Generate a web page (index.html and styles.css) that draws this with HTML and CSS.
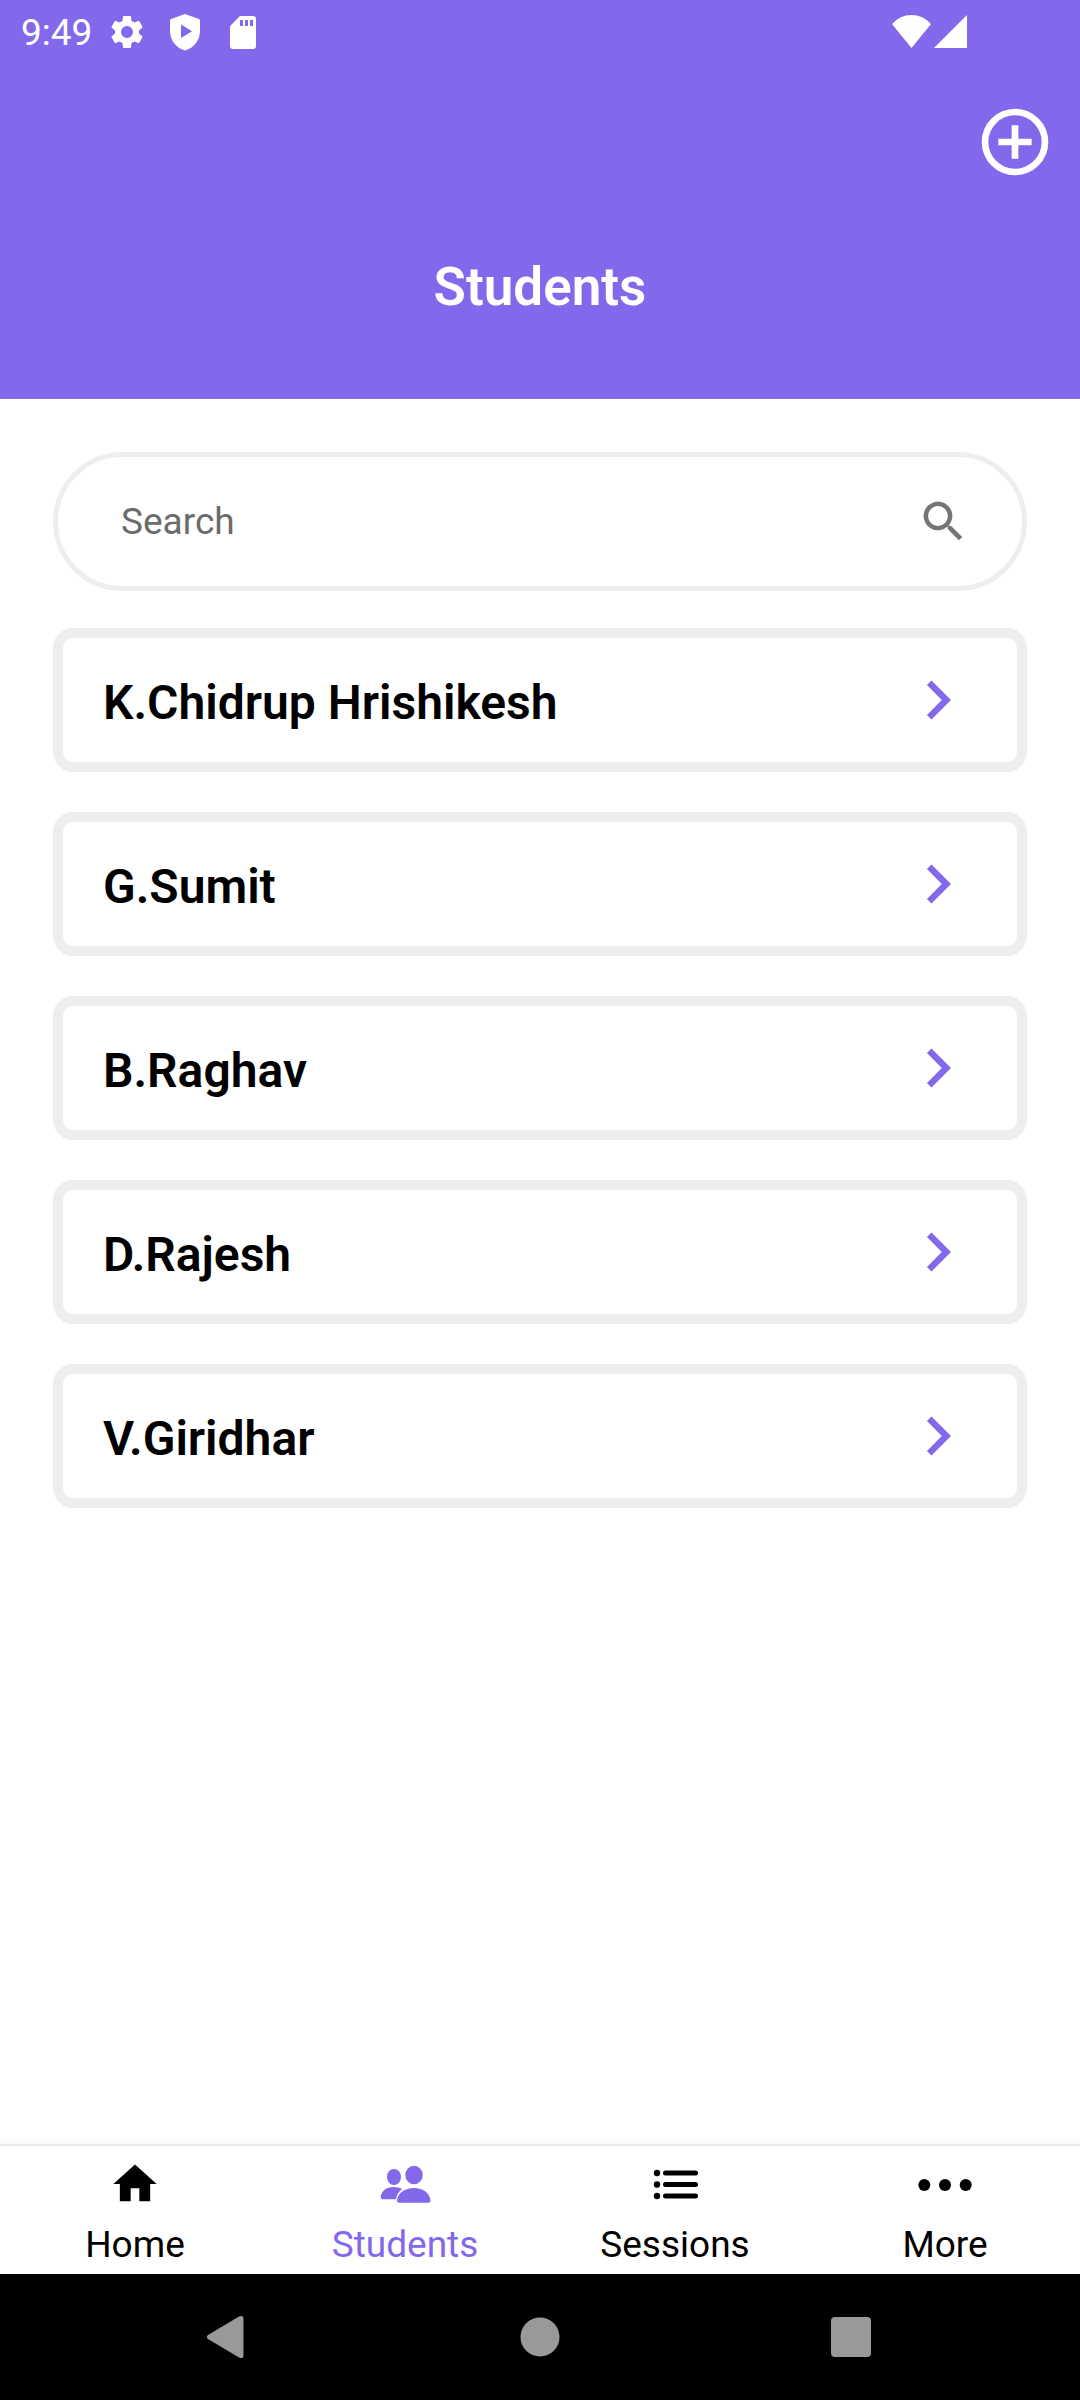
FILE: index.html
```html
<!DOCTYPE html>
<html lang="en">
<head>
<meta charset="utf-8">
<meta name="viewport" content="width=device-width, initial-scale=1">
<title>Students</title>
<link rel="stylesheet" href="styles.css">
</head>
<body>
<div class="app">
  <header class="header">
    <div class="status">
      <span class="time">9:49</span>
      <svg class="status-icon" viewBox="0 0 24 24"><path d="M19.14 12.94c.04-.3.06-.61.06-.94 0-.32-.02-.64-.07-.94l2.03-1.58a.49.49 0 0 0 .12-.61l-1.92-3.32a.49.49 0 0 0-.59-.22l-2.39.96c-.5-.38-1.03-.7-1.62-.94l-.36-2.54a.48.48 0 0 0-.48-.41h-3.84a.48.48 0 0 0-.47.41l-.36 2.54c-.59.24-1.13.57-1.62.94l-2.39-.96a.48.48 0 0 0-.59.22L2.74 8.87a.47.47 0 0 0 .12.61l2.03 1.58c-.05.3-.09.63-.09.94s.02.64.07.94l-2.03 1.58a.49.49 0 0 0-.12.61l1.92 3.32c.12.22.37.29.59.22l2.39-.96c.5.38 1.03.7 1.62.94l.36 2.54c.05.24.24.41.48.41h3.84c.24 0 .44-.17.47-.41l.36-2.54c.59-.24 1.13-.56 1.62-.94l2.39.96c.22.08.47 0 .59-.22l1.92-3.32a.47.47 0 0 0-.12-.61zM12 15.6a3.6 3.6 0 1 1 0-7.2 3.6 3.6 0 0 1 0 7.2z"/></svg>
      <svg class="status-icon" viewBox="0 0 40 40"><path fill-rule="evenodd" d="M20 2 34 7Q35 7.500 35 9V19C35 28 29 36 20 38.500 11 36 5 28 5 19V9Q5 7.500 6 7zM16 12.500V26L27 19.200z"/></svg>
      <svg class="status-icon" viewBox="0 0 40 40"><path fill-rule="evenodd" d="M17 4H30Q33 4 33 7V34Q33 37 30 37H10Q7 37 7 34V14zM17 8V14H20V8zM22 8V14H25V8zM27 8V14H30V8z"/></svg>
      <svg class="network" viewBox="0 0 76 34"><path d="M0 9Q8 0 19.500 0T39 9L19.500 33zM75 0V33H42z"/></svg>
    </div>
    <div class="actions">
      <button class="add" type="button" aria-label="Add student">
        <svg viewBox="0 0 24 24"><path d="M13 7h-2v4H7v2h4v4h2v-4h4v-2h-4V7zm-1-5a10 10 0 1 0 0 20 10 10 0 0 0 0-20zm0 18a8 8 0 1 1 0-16 8 8 0 0 1 0 16z"/></svg>
      </button>
    </div>
    <h1 class="title">Students</h1>
  </header>

  <main class="content">
    <form class="search">
      <input class="search-input" type="search" placeholder="Search" aria-label="Search">
      <button class="search-button" type="button" aria-label="Search">
        <svg viewBox="0 0 24 24"><path d="M15.500 14h-.79l-.28-.27A6.500 6.500 0 1 0 13.730 14.430l.27.28v.79l5 4.990L20.490 19zm-6 0a4.500 4.500 0 1 1 0-9 4.500 4.500 0 0 1 0 9z"/></svg>
      </button>
    </form>
    <ul class="students">
      <li><a class="student" href="#"><span class="name">K.Chidrup Hrishikesh</span><svg class="chevron" viewBox="0 0 24 24"><path d="M10 6 8.590 7.410 13.170 12l-4.580 4.590L10 18l6-6z"/></svg></a></li>
      <li><a class="student" href="#"><span class="name">G.Sumit</span><svg class="chevron" viewBox="0 0 24 24"><path d="M10 6 8.590 7.410 13.170 12l-4.580 4.590L10 18l6-6z"/></svg></a></li>
      <li><a class="student" href="#"><span class="name">B.Raghav</span><svg class="chevron" viewBox="0 0 24 24"><path d="M10 6 8.590 7.410 13.170 12l-4.580 4.590L10 18l6-6z"/></svg></a></li>
      <li><a class="student" href="#"><span class="name">D.Rajesh</span><svg class="chevron" viewBox="0 0 24 24"><path d="M10 6 8.590 7.410 13.170 12l-4.580 4.590L10 18l6-6z"/></svg></a></li>
      <li><a class="student" href="#"><span class="name">V.Giridhar</span><svg class="chevron" viewBox="0 0 24 24"><path d="M10 6 8.590 7.410 13.170 12l-4.580 4.590L10 18l6-6z"/></svg></a></li>
    </ul>
  </main>

  <nav class="tabs">
    <a class="tab" href="#"><svg viewBox="0 0 24 24"><path d="M10 20v-6h4v6h5v-8h3L12 3 2 12h3v8z"/></svg><span>Home</span></a>
    <a class="tab tab-active" href="#" aria-current="page"><svg viewBox="0 0 52 52"><ellipse cx="15" cy="19" rx="7" ry="8"/><ellipse cx="35" cy="17" rx="8.700" ry="9.300"/><path d="M4 41.300Q1.500 41.300 1.700 38.500C3 32 8 29 15 29Q20 29 23.300 31Q18 34.500 17 41.300zM20 44.700Q18 44.700 18 42.500C18.500 35 26 30 35 30S51 35 51.500 42.500Q51.500 44.700 49.500 44.700z"/></svg><span>Students</span></a>
    <a class="tab" href="#"><svg viewBox="0 0 52 52"><circle cx="8" cy="15" r="3.200"/><circle cx="8" cy="26.500" r="3.200"/><circle cx="8" cy="38" r="3.200"/><path class="line" d="M16.500 15H46.500M16.500 26.500H46.500M16.500 38H46.500"/></svg><span>Sessions</span></a>
    <a class="tab" href="#"><svg viewBox="0 0 52 52"><circle cx="5.300" cy="27" r="6"/><circle cx="26" cy="27" r="6"/><circle cx="46.700" cy="27" r="6"/></svg><span>More</span></a>
  </nav>

  <div class="system-nav">
    <button type="button" aria-label="Back"><svg viewBox="0 0 60 60"><path d="M9 28 40 9.500Q44.500 7.500 44.500 12V48Q44.500 52.500 40 50.500L9 32Q6.500 30 9 28z"/></svg></button>
    <button type="button" aria-label="Home"><svg viewBox="0 0 60 60"><circle cx="30" cy="30" r="19.500"/></svg></button>
    <button type="button" aria-label="Overview"><svg viewBox="0 0 60 60"><rect x="10" y="10" width="40" height="40" rx="4"/></svg></button>
  </div>
</div>
</body>
</html>
```
FILE: styles.css
```css
:root {
  --accent: #8468ec;
  --line: #eeeeee;
}

* {
  box-sizing: border-box;
}

body {
  margin: 0;
  background: #fff;
  color: #000;
  font-family: Roboto, "Noto Sans", sans-serif;
  font-size: 37px;
}

svg {
  display: block;
  fill: currentColor;
  overflow: visible;
}

button {
  padding: 0;
  border: 0;
  background: none;
  color: inherit;
}

a {
  color: inherit;
  text-decoration: none;
}

.app {
  display: flex;
  flex-direction: column;
  min-height: 100vh;
}

.header {
  padding-bottom: 81px;
  background: var(--accent);
  color: #fff;
}

.status {
  display: flex;
  align-items: center;
  gap: 18px;
  height: 63px;
  padding: 0 112px 0 21px;
}

.time {
  margin-right: -3px;
  padding-top: 2px;
  line-height: 40px;
}

.status-icon {
  width: 40px;
  height: 40px;
}

.network {
  width: 76px;
  height: 34px;
  margin-left: auto;
}

.actions {
  display: flex;
  justify-content: flex-end;
  padding: 39px 25px 74px;
}

.add svg {
  width: 80px;
  height: 80px;
}

.title {
  margin: 0;
  font-size: 53px;
  font-weight: 600;
  line-height: 62px;
  text-align: center;
}

.content {
  flex: 1;
  padding: 53px;
}

.search {
  display: flex;
  align-items: center;
  height: 139px;
  margin-bottom: 37px;
  padding: 0 52px 0 63px;
  border: 5px solid var(--line);
  border-radius: 70px;
}

.search-input {
  flex: 1;
  min-width: 0;
  padding: 0;
  border: 0;
  outline: 0;
  background: none;
  font: inherit;
}

.search-input::placeholder {
  color: #6b6b6b;
  opacity: 1;
}

.search-button {
  color: #757575;
}

.search-button svg {
  width: 53px;
  height: 53px;
}

.students {
  display: grid;
  gap: 40px;
  margin: 0;
  padding: 0;
  list-style: none;
}

.student {
  display: flex;
  align-items: center;
  justify-content: space-between;
  padding: 23px 40px;
  border: 10px solid var(--line);
  border-radius: 20px;
  font-size: 48px;
  font-weight: 600;
}

.name {
  padding-top: 4px;
}

.chevron {
  width: 78px;
  height: 78px;
  color: var(--accent);
}

.tabs {
  display: grid;
  grid-template-columns: repeat(4, 1fr);
  border-top: 2px solid #e8e8e8;
  background: #fff;
  box-shadow: 0 -2px 8px rgba(0, 0, 0, 0.04);
}

.tab {
  display: flex;
  flex-direction: column;
  align-items: center;
  gap: 13px;
  padding: 12px 0 7px;
  line-height: 44px;
}

.tab svg {
  width: 52px;
  height: 52px;
}

.tab-active {
  color: var(--accent);
}

.line {
  stroke: currentColor;
  stroke-width: 5;
  stroke-linecap: round;
}

.system-nav {
  display: grid;
  grid-template-columns: repeat(3, 1fr);
  justify-items: center;
  padding: 33px 74px;
  background: #000;
  color: #999;
}

.system-nav svg {
  width: 60px;
  height: 60px;
}
```
